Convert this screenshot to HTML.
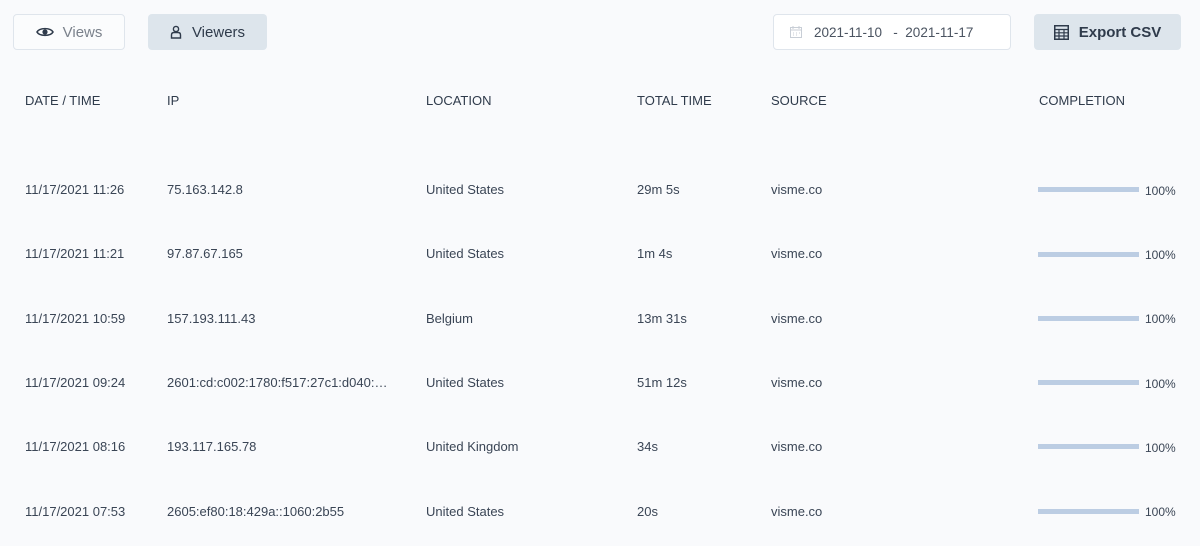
<!DOCTYPE html>
<html><head><meta charset="utf-8"><style>
*{margin:0;padding:0;box-sizing:border-box}
body{width:1200px;height:546px;background:#f9fafc;font-family:"Liberation Sans",sans-serif;color:#3a4555;position:relative;overflow:hidden}
.btn{position:absolute;top:14px;height:36px;border-radius:4px;display:flex;align-items:center;justify-content:center;font-size:15px}
.h{position:absolute;top:93px;font-size:13px;color:#2f3b4b}
.c{position:absolute;font-size:13px;color:#3a4555;white-space:nowrap}
.bar{position:absolute;left:1038px;width:101px;height:5px;background:#bccde3}
.p{position:absolute;left:1145px;font-size:12px;color:#3a4555}
</style></head><body>
<div class="btn" style="left:13px;width:112px;border:1px solid #dfe5ec;background:#fbfcfd;color:#7b828c">
<svg width="18" height="12" viewBox="0 0 18 12" style="margin-right:9px"><path d="M1 6C3.5 1.5 14.5 1.5 17 6C14.5 10.5 3.5 10.5 1 6Z" fill="none" stroke="#2f3b4b" stroke-width="1.6"/><circle cx="9" cy="6" r="2.6" fill="#2f3b4b"/></svg>Views</div>
<div class="btn" style="left:148px;width:119px;background:#dde5ec;color:#2f3b4b">
<svg width="12" height="14" viewBox="0 0 12 14" style="margin-right:10px"><circle cx="6" cy="4" r="2.6" fill="none" stroke="#2f3b4b" stroke-width="1.4"/><path d="M1.5 13V10Q1.5 7.5 4 7.5H8Q10.5 7.5 10.5 10V13Z" fill="none" stroke="#2f3b4b" stroke-width="1.4"/></svg>Viewers</div>
<div class="btn" style="left:773px;width:238px;border:1px solid #dfe5ec;background:#fff;color:#4a5360;font-size:13.5px;justify-content:flex-start;padding-left:16px">
<svg width="12" height="12" viewBox="0 0 12 12" style="margin-right:12px"><rect x="0.5" y="1.5" width="11" height="10" fill="none" stroke="#c8ced6"/><path d="M0.5 4h11M3 0v3M9 0v3M3 7h1M6 7h1M9 7h1M3 9h1M6 9h1" stroke="#c8ced6"/></svg>2021-11-10 &nbsp; - &nbsp;2021-11-17</div>
<div class="btn" style="left:1034px;width:147px;background:#dde5ec;color:#2f3b4b;font-weight:bold">
<svg width="15" height="15" viewBox="0 0 15 15" style="margin-right:10px"><rect x="0.75" y="0.75" width="13.5" height="13.5" fill="none" stroke="#2f3b4b" stroke-width="1.5"/><path d="M0.75 4.5h13.5M0.75 7.8h13.5M0.75 11h13.5M5 4.5v10M10 4.5v10" stroke="#2f3b4b" stroke-width="1.2"/></svg>Export CSV</div>
<div class="h" style="left:25px">DATE / TIME</div>
<div class="h" style="left:167px">IP</div>
<div class="h" style="left:426px">LOCATION</div>
<div class="h" style="left:637px">TOTAL TIME</div>
<div class="h" style="left:771px">SOURCE</div>
<div class="h" style="left:1039px">COMPLETION</div>

<div class="c" style="left:25px;top:182px">11/17/2021 11:26</div><div class="c" style="left:167px;top:182px">75.163.142.8</div><div class="c" style="left:426px;top:182px">United States</div><div class="c" style="left:637px;top:182px">29m 5s</div><div class="c" style="left:771px;top:182px">visme.co</div><div class="bar" style="top:187px"></div><div class="p" style="top:184px">100%</div>
<div class="c" style="left:25px;top:246px">11/17/2021 11:21</div><div class="c" style="left:167px;top:246px">97.87.67.165</div><div class="c" style="left:426px;top:246px">United States</div><div class="c" style="left:637px;top:246px">1m 4s</div><div class="c" style="left:771px;top:246px">visme.co</div><div class="bar" style="top:252px"></div><div class="p" style="top:248px">100%</div>
<div class="c" style="left:25px;top:311px">11/17/2021 10:59</div><div class="c" style="left:167px;top:311px">157.193.111.43</div><div class="c" style="left:426px;top:311px">Belgium</div><div class="c" style="left:637px;top:311px">13m 31s</div><div class="c" style="left:771px;top:311px">visme.co</div><div class="bar" style="top:316px"></div><div class="p" style="top:312px">100%</div>
<div class="c" style="left:25px;top:375px">11/17/2021 09:24</div><div class="c" style="left:167px;top:375px;width:229px;overflow:hidden;text-overflow:ellipsis">2601:cd:c002:1780:f517:27c1:d040:…</div><div class="c" style="left:426px;top:375px">United States</div><div class="c" style="left:637px;top:375px">51m 12s</div><div class="c" style="left:771px;top:375px">visme.co</div><div class="bar" style="top:380px"></div><div class="p" style="top:377px">100%</div>
<div class="c" style="left:25px;top:439px">11/17/2021 08:16</div><div class="c" style="left:167px;top:439px">193.117.165.78</div><div class="c" style="left:426px;top:439px">United Kingdom</div><div class="c" style="left:637px;top:439px">34s</div><div class="c" style="left:771px;top:439px">visme.co</div><div class="bar" style="top:444px"></div><div class="p" style="top:441px">100%</div>
<div class="c" style="left:25px;top:504px">11/17/2021 07:53</div><div class="c" style="left:167px;top:504px">2605:ef80:18:429a::1060:2b55</div><div class="c" style="left:426px;top:504px">United States</div><div class="c" style="left:637px;top:504px">20s</div><div class="c" style="left:771px;top:504px">visme.co</div><div class="bar" style="top:509px"></div><div class="p" style="top:505px">100%</div>
</body></html>
